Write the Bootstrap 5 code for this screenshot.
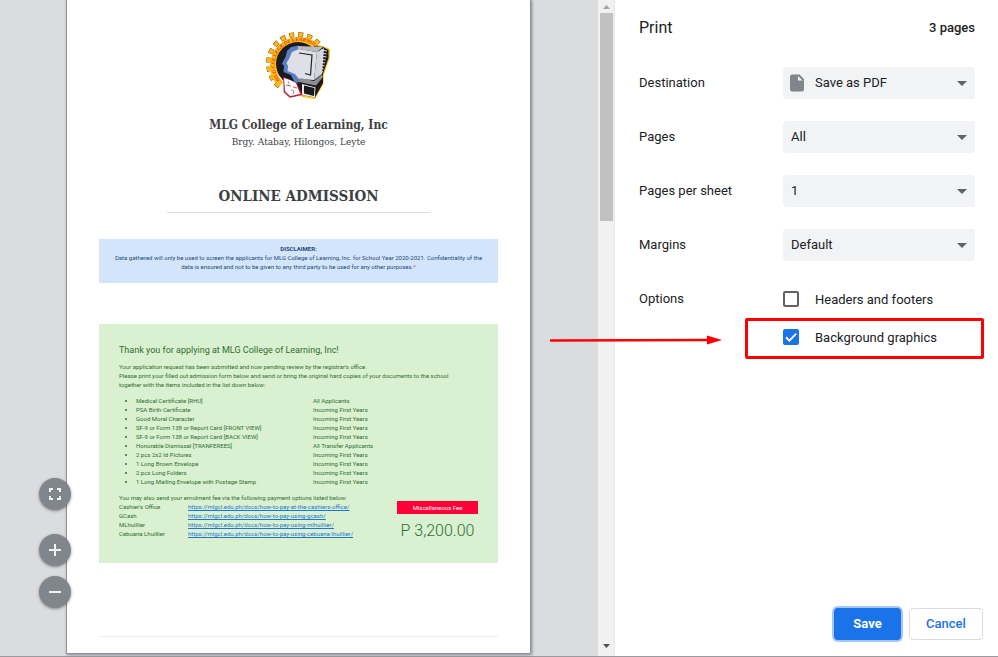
<!DOCTYPE html>
<html lang="en">
<head>
<meta charset="utf-8">
<meta name="viewport" content="width=device-width, initial-scale=1">
<title>Print</title>
<link rel="stylesheet" href="https://cdn.jsdelivr.net/npm/bootstrap@5.3.0/dist/css/bootstrap.min.css">
<style>
  body { font-family: Roboto, "Liberation Sans", sans-serif; font-size: 13px; line-height: 20px; color: #202124; }
  .print-dialog { min-height: 100vh; border-bottom: 1px solid #9b9b9d; }

  /* Preview */
  .preview { background: #dadce0; }
  .paper { margin: 0 68px 3px 67px; padding: 32px 32px 16px; background: #fff; box-shadow: 0 0 0 1px #8f9196, 1px 1px 3px 1px #85868c; }
  .paper-brand { font-family: "DejaVu Serif Condensed", "DejaVu Serif", serif; color: #3c4043; }
  .brand-name { font-size: 12px; line-height: 18px; font-weight: 700; margin: 16px 0 0; }
  .brand-place { font-size: 10px; line-height: 16px; margin: 0; }
  .form-title { font-size: 15px; line-height: 24px; font-weight: 700; margin: 34px 0 0; padding-bottom: 4px; border-bottom: 1px solid #dcdcdc; width: 66%; }
  .fine { font-size: 6px; line-height: 9px; }
  .disclaimer { background: #d3e5fa; color: #1c4a7c; margin-top: 26px; padding: 5px 8px 12px; }
  .disclaimer p { margin: 0; padding: 0 3px; }
  .notice { background: #d9f0d1; color: #2f6f30; margin-top: 41px; padding: 20px 20px 21px; }
  .notice h2 { font-size: 9px; line-height: 13px; font-weight: 400; margin: 0 0 5px; }
  .notice-copy { padding-right: 12px; }
  .req-list { margin: 7px 0; padding-left: 17px; }
  .req-list li > div { display: grid; grid-template-columns: 177px 1fr; }
  .pay-grid { display: grid; grid-template-columns: 69px 1fr; }
  .pay-grid a { color: #1a76d2; }
  .fee { width: 81px; margin-top: 8px; }
  .fee-tag { background: #ff0038; color: #fff; line-height: 13px; }
  .fee-sum { font-size: 16px; line-height: 22px; font-weight: 300; margin-top: 6px; }
  .paper-rule { border-top: 1px solid #ececec; margin-top: 73px; }

  .zoom-tools { left: 39px; bottom: 48px; }
  .zoom-tools .btn { width: 32px; height: 32px; border-radius: 50%; background: #80868b; box-shadow: 0 1px 3px #0006; padding: 0; border: 0; }
  .zoom-tools .btn svg { width: 18px; height: 18px; }
  .zoom-tools .btn-fit { margin-bottom: 24px; }
  .zoom-tools .btn-in { margin-bottom: 10px; }

  .page-scroll { width: 18px; padding: 0 1px 0 2px; background: #f1f1f1; border-right: 1px solid #e8e8ec; }
  .page-scroll button { height: 13px; border: 0; padding: 0; background: none; }
  .scroll-thumb { height: 208px; width: 13px; background: #c1c1c1; }

  /* Settings */
  .settings { width: 383px; padding: 0 15px 16px 24px; }
  .settings-body { padding-right: 8px; }
  .settings-head { height: 56px; margin-bottom: 11px; }
  .settings-head h1 { font-size: 16px; line-height: 24px; font-weight: 400; margin: 0; }
  .page-count { font-weight: 500; }
  .setting { margin-bottom: 22px; }
  .setting-name { line-height: 32px; font-size: 13px; }
  .setting-field { width: 192px; }
  .form-select { height: 32px; border: 0; border-radius: 4px; padding: 0 32px 0 8px; font-size: 13px; line-height: 32px; color: #202124; background-color: #f1f3f4;
    background-image: url("data:image/svg+xml,%3Csvg xmlns='http://www.w3.org/2000/svg' viewBox='0 0 10 5'%3E%3Cpath d='M0 0h10L5 5z' fill='%235f6368'/%3E%3C/svg%3E");
    background-size: 10px 5px; background-position: right 8px center; }
  .has-icon .form-select { padding-left: 32px; }
  .field-icon { left: 5px; top: 7px; width: 18px; height: 18px; }
  .option { height: 32px; }
  .option + .option { margin-top: 6px; }
  .option label { padding-top: 2px; }
  .option .form-check-input { width: 16px; height: 16px; margin: 0; border: 2px solid #5f6368; border-radius: 2px; }
  .option .form-check-input:checked { background-color: #1a73e8; border-color: #1a73e8; background-size: 16px 16px;
    background-image: url("data:image/svg+xml,%3Csvg xmlns='http://www.w3.org/2000/svg' viewBox='0 0 16 16'%3E%3Cpath d='M3 8.2l3.4 3.4L13.2 4.6' fill='none' stroke='white' stroke-width='2'/%3E%3C/svg%3E"); }
  .callout-frame { inset: -3px -9px -6px -38px; border: 3px solid #f00; border-radius: 2px; pointer-events: none; }
  .callout-arrow { width: 172px; height: 12px; right: 253px; top: 13px; pointer-events: none; }

  .actions .btn { height: 32px; font-size: 13px; line-height: 20px; font-weight: 500; border-radius: 4px; padding: 5px 16px; }
  .actions .btn-save { background: #1a73e8; color: #fff; font-weight: 700; min-width: 67px; box-shadow: 0 0 0 2px #a3c7f7; }
  .actions .btn-cancel { color: #1a73e8; border: 1px solid #dadce0; background: #fff; min-width: 74px; }
</style>
<script src="https://cdn.jsdelivr.net/npm/bootstrap@5.3.0/dist/js/bootstrap.bundle.min.js"></script>
</head>
<body>
<div class="print-dialog d-flex">
  <main class="preview flex-grow-1 position-relative d-flex flex-column">
    <article class="paper flex-grow-1">
      <header class="paper-brand d-flex flex-column align-items-center text-center">
        <svg width="66" height="68" viewBox="0 0 66 68" role="img" aria-label="College seal">
          <g fill="none">
            <path d="M13.400 54.200A29 29 0 1 1 53.200 12.300" stroke="#7d6120" stroke-width="5" stroke-dasharray="5 4"/>
            <path d="M13.400 54.200A29 29 0 1 1 53.200 12.300" stroke="#fdb813" stroke-width="4" stroke-dasharray="4 5" stroke-dashoffset="-.5"/>
            <path d="M15 52.500A25 25 0 1 1 50.600 15.500" stroke="#fdb813" stroke-width="6.500"/>
          </g>
          <path d="M32 10L57 14 64 17 63.500 27 58 42 57.500 52 49 67 36 65 24 50 12 42Z" fill="#fdc51c"/>
          <circle cx="32" cy="32" r="22" fill="#1b1a1e"/>
          <path d="M48 14L57 15 62.500 18 62.500 26 57 42 57 51 49 65.500 36 63 30 52Z" fill="#1b1a1e"/>
          <path id="rim" d="M14 48A24 24 0 1 1 52 18.700" fill="none"/>
          <text font-family="Liberation Serif, serif" font-size="5" font-weight="700" fill="#e5352b"><textPath href="#rim">MLG COLLEGE OF LEARNING</textPath></text>
          <path d="M33 13.500L25 15 21 19 19.500 25 16 31.500 18 34 17.500 40 25 43 29 51 34 50 34 42 33 18Z" fill="#5b7fc4"/>
          <path d="M33 17L26 20 23.500 26 20.500 31 22 34 21.500 39 29 42 33 47 48 48 51 20Z" fill="#dfe0e7"/>
          <path d="M32 14L57 15 51 20 32 17Z" fill="#b9bac4"/>
          <path d="M51 20L58 16 56 42 48 48Z" fill="#d3d4dc"/>
          <path d="M55 18l6 1M54.500 21l6 1M54.500 24l6 1M54 27l5.500 1M54 30l5 1M54 33l4.500 1M53.500 36l4 1M53.500 39l3.500 1" stroke="#dfe0e7" stroke-width="1.200"/>
          <path d="M33 21L46 23 44.500 43 39 41.500" fill="none" stroke="#222" stroke-width="1.200"/>
          <path d="M34 46L48 49 56 42.500 57 45 50 53.500 33 50Z" fill="#8d8d94"/>
          <path d="M36 52L50 55.500 49 65.500 36 63Z" fill="#e9e9ee"/>
          <path d="M38 53.500L48.500 56 48 64 38 61.500Z" fill="#1b1a1e"/>
          <path d="M49.500 55.500L56.500 46 56.500 51 49 65Z" fill="#1b1a1e"/>
          <path d="M18 46L30 51 35.500 62.500 24 65 18.500 60Z" fill="#f7f5f7" stroke="#b5213c" stroke-width="1.600"/>
          <path d="M18 46L24 48 30 51 33 60 27 59 24 63 19 58Z" fill="#fff"/>
          <path d="M20 53l5 1M27 55l4 1" stroke="#e15757" stroke-width="1"/>
          <path d="M25 58l3 1-1 3M22 49l1 3" stroke="#888" stroke-width=".8" fill="none"/>
        </svg>
        <p class="brand-name">MLG College of Learning, Inc</p>
        <p class="brand-place">Brgy. Atabay, Hilongos, Leyte</p>
        <h2 class="form-title">ONLINE ADMISSION</h2>
      </header>
      <section class="disclaimer fine text-center">
        <strong class="d-block">DISCLAIMER:</strong>
        <p>Data gathered will only be used to screen the applicants for MLG College of Learning, Inc. for School Year 2020-2021. Confidentiality of the data is ensured and not to be given to any third party to be used for any other purposes.<span class="text-danger">*</span></p>
      </section>
      <section class="notice fine">
        <h2>Thank you for applying at MLG College of Learning, Inc!</h2>
        <div>Your application request has been submitted and now pending review by the registrar's office.</div>
        <div class="notice-copy">Please print your filled out admission form below and send or bring the original hard copies of your documents to the school together with the items included in the list down below:</div>
        <ul class="req-list">
          <li><div><span>Medical Certificate [RHU]</span><span>All Applicants</span></div></li>
          <li><div><span>PSA Birth Certificate</span><span>Incoming First Years</span></div></li>
          <li><div><span>Good Moral Character</span><span>Incoming First Years</span></div></li>
          <li><div><span>SF-9 or Form 138 or Report Card [FRONT VIEW]</span><span>Incoming First Years</span></div></li>
          <li><div><span>SF-9 or Form 138 or Report Card [BACK VIEW]</span><span>Incoming First Years</span></div></li>
          <li><div><span>Honorable Dismissal [TRANFEREES]</span><span>All Transfer Applicants</span></div></li>
          <li><div><span>2 pcs 2x2 Id Pictures</span><span>Incoming First Years</span></div></li>
          <li><div><span>1 Long Brown Envelope</span><span>Incoming First Years</span></div></li>
          <li><div><span>2 pcs Long Folders</span><span>Incoming First Years</span></div></li>
          <li><div><span>1 Long Mailing Envelope with Postage Stamp</span><span>Incoming First Years</span></div></li>
        </ul>
        <div class="d-flex justify-content-between">
          <div>
            <div>You may also send your enrolment fee via the following payment options listed below:</div>
            <div class="pay-grid">
              <span>Cashier's Office</span><a href="#">https://mlgcl.edu.ph/docs/how-to-pay-at-the-cashiers-office/</a>
              <span>GCash</span><a href="#">https://mlgcl.edu.ph/docs/how-to-pay-using-gcash/</a>
              <span>MLhuillier</span><a href="#">https://mlgcl.edu.ph/docs/how-to-pay-using-mlhuillier/</a>
              <span>Cebuana Lhuillier</span><a href="#">https://mlgcl.edu.ph/docs/how-to-pay-using-cebuana-lhuillier/</a>
            </div>
          </div>
          <div class="fee text-center">
            <div class="fee-tag">Miscellaneous Fee</div>
            <div class="fee-sum">P 3,200.00</div>
          </div>
        </div>
      </section>
      <div class="paper-rule"></div>
    </article>
    <div class="zoom-tools position-absolute d-flex flex-column">
      <button type="button" class="btn btn-fit d-flex align-items-center justify-content-center" aria-label="Fit to page"><svg viewBox="0 0 18 18" fill="none" stroke="#f1f3f4" stroke-width="2"><path d="M4 7V4h3M11 4h3v3M14 11v3h-3M7 14H4v-3"/></svg></button>
      <button type="button" class="btn btn-in d-flex align-items-center justify-content-center" aria-label="Zoom in"><svg viewBox="0 0 18 18" stroke="#f1f3f4" stroke-width="2"><path d="M3 9h12M9 3v12"/></svg></button>
      <button type="button" class="btn d-flex align-items-center justify-content-center" aria-label="Zoom out"><svg viewBox="0 0 18 18" stroke="#f1f3f4" stroke-width="2"><path d="M3 9h12"/></svg></button>
    </div>
  </main>
  <div class="page-scroll d-flex flex-column">
    <button type="button" class="d-flex align-items-center justify-content-center" aria-label="Scroll up"><svg width="7" height="4" viewBox="0 0 7 4"><path d="M0 4h7L3.500 0z" fill="#a3a3a3"/></svg></button>
    <div class="scroll-thumb"></div>
    <button type="button" class="d-flex align-items-center justify-content-center mt-auto mb-1" aria-label="Scroll down"><svg width="7" height="4" viewBox="0 0 7 4"><path d="M0 0h7L3.500 4z" fill="#505050"/></svg></button>
  </div>
  <aside class="settings d-flex flex-column flex-shrink-0">
    <form class="settings-body">
      <div class="settings-head d-flex align-items-center justify-content-between">
        <h1>Print</h1><span class="page-count">3 pages</span>
      </div>
      <div class="setting d-flex justify-content-between">
        <label class="setting-name" for="dest">Destination</label>
        <div class="setting-field has-icon position-relative">
          <select class="form-select" id="dest"><option>Save as PDF</option></select>
          <svg class="field-icon position-absolute" viewBox="0 0 18 18"><path d="M4 .5h7.500L16 5v10.500a2 2 0 0 1-2 2H4a2 2 0 0 1-2-2v-13a2 2 0 0 1 2-2z" fill="#80868b"/><path d="M10 2l4.500 4.500H10z" fill="#f1f3f4"/></svg>
        </div>
      </div>
      <div class="setting d-flex justify-content-between">
        <label class="setting-name" for="pages">Pages</label>
        <div class="setting-field"><select class="form-select" id="pages"><option>All</option></select></div>
      </div>
      <div class="setting d-flex justify-content-between">
        <label class="setting-name" for="sheet">Pages per sheet</label>
        <div class="setting-field"><select class="form-select" id="sheet"><option>1</option></select></div>
      </div>
      <div class="setting d-flex justify-content-between">
        <label class="setting-name" for="margins">Margins</label>
        <div class="setting-field"><select class="form-select" id="margins"><option>Default</option></select></div>
      </div>
      <div class="d-flex justify-content-between">
        <span class="setting-name">Options</span>
        <div class="setting-field">
          <div class="option d-flex align-items-center gap-3">
            <input class="form-check-input" type="checkbox" id="hf"><label for="hf">Headers and footers</label>
          </div>
          <div class="option d-flex align-items-center gap-3 position-relative">
            <input class="form-check-input" type="checkbox" id="bg" checked><label for="bg">Background graphics</label>
            <div class="callout-frame position-absolute"></div>
            <svg class="callout-arrow position-absolute" viewBox="0 0 172 12"><path d="M0 6.500L158 6" stroke="#f00" stroke-width="2.600"/><path d="M157 1.500L172 6 157 10.500z" fill="#f00"/></svg>
          </div>
        </div>
      </div>
    </form>
    <div class="actions d-flex justify-content-end gap-2 mt-auto">
      <button type="button" class="btn btn-save">Save</button>
      <button type="button" class="btn btn-cancel">Cancel</button>
    </div>
  </aside>
</div>
</body>
</html>
